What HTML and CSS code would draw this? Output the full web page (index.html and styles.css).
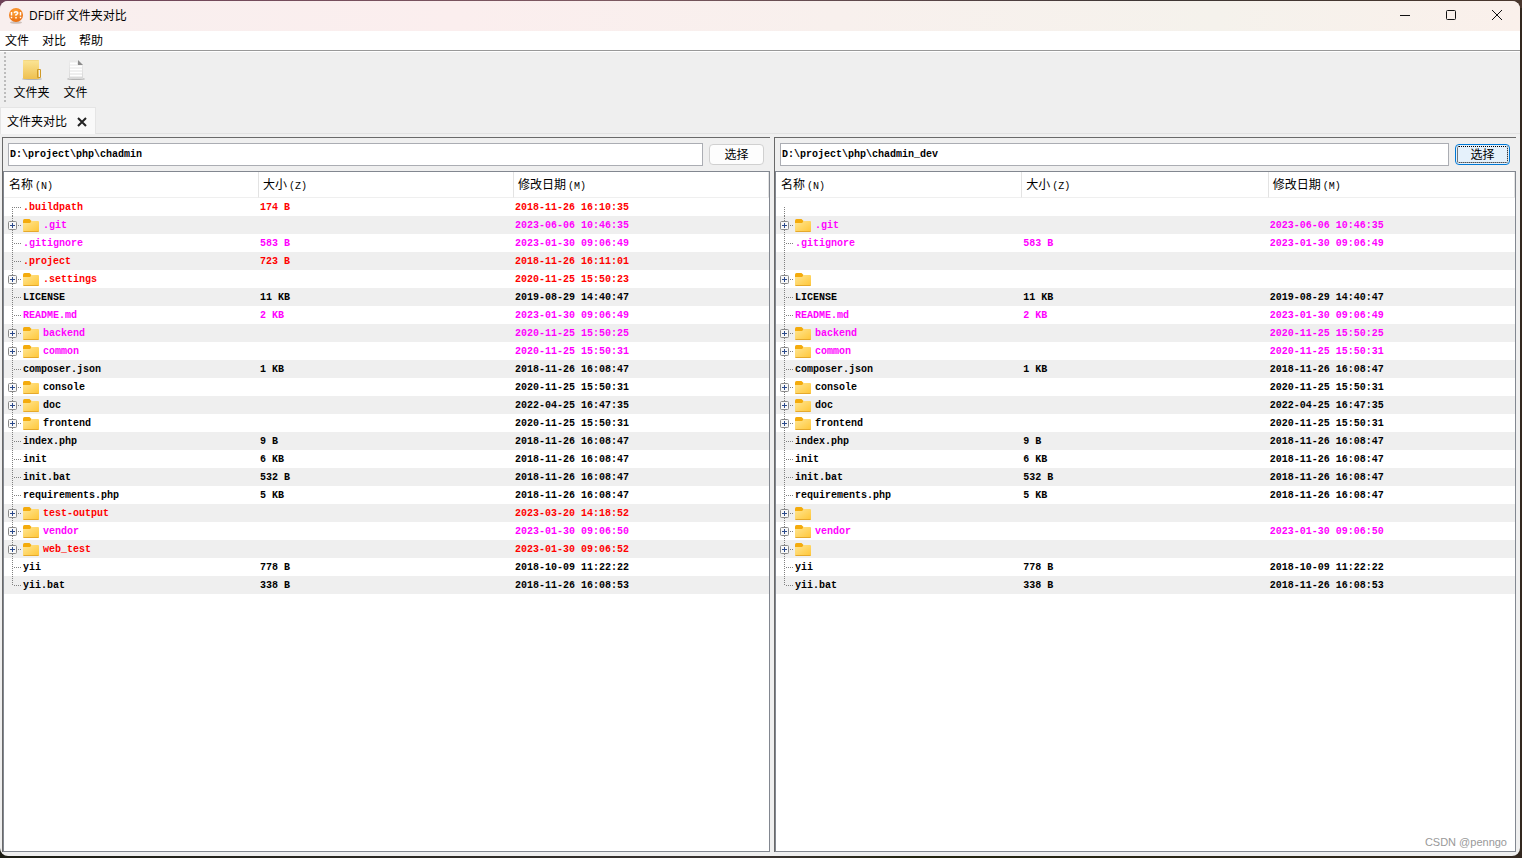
FILE: index.html
```html
<!DOCTYPE html>
<html lang="zh-CN">
<head>
<meta charset="utf-8">
<title>DFDiff 文件夹对比</title>
<link rel="stylesheet" href="styles.css">
</head>
<body>
<svg class="defs" aria-hidden="true">
  <defs>
    <linearGradient id="folder-fill" x1="0" y1="0" x2="1" y2="1"><stop offset="0" stop-color="#ffe694"/><stop offset="1" stop-color="#ffc636"/></linearGradient>
    <linearGradient id="book-fill" x1="0" y1="0" x2="0" y2="1"><stop offset="0" stop-color="#fbe596"/><stop offset="1" stop-color="#efc050"/></linearGradient>
    <linearGradient id="page-fill" x1="0" y1="0" x2="0" y2="1"><stop offset="0" stop-color="#ececec"/><stop offset="1" stop-color="#d8d8d8"/></linearGradient>
    <radialGradient id="app-fill" cx=".45" cy=".3" r=".75"><stop offset="0" stop-color="#ffa63c"/><stop offset="1" stop-color="#e8690a"/></radialGradient>
    <symbol id="folder" viewBox="0 0 16 13">
      <path d="M0 1.5Q0 0 1.5 0H6.5L8.5 2V5H0Z" fill="#f4ab0c"/>
      <path d="M0 4H7L9 2H15Q16 2 16 3V12Q16 13 15 13H1Q0 13 0 12Z" fill="url(#folder-fill)"/>
      <path d="M.5 12.5H15.5" stroke="#e5a92c"/>
    </symbol>
  </defs>
</svg>
<div class="window">
  <header class="titlebar">
    <svg class="app-icon" viewBox="0 0 16 16" aria-hidden="true">
      <ellipse cx="8" cy="14.500" rx="6" ry="1.300" fill="#cdbfb8"/>
      <circle cx="8" cy="7" r="7" fill="url(#app-fill)"/>
      <path d="M3.500 4V7.500M12.500 4V7.500M6.200 5Q6.500 3.700 8 3.700T9.800 5Q9.800 6 8 6.800V7.800M3.500 8.800V10.200M8 9V10.400M12.500 8.800V10.200" fill="none" stroke="#fff" stroke-width="1.500"/>
    </svg>
    <h1 class="title">DFDiff 文件夹对比</h1>
    <div class="controls">
      <button class="control" aria-label="最小化"><svg viewBox="0 0 12 12"><path d="M1 5.500H11"/></svg></button>
      <button class="control" aria-label="最大化"><svg viewBox="0 0 12 12"><rect x="1.500" y=".500" width="9" height="9" rx="1"/></svg></button>
      <button class="control" aria-label="关闭"><svg viewBox="0 0 12 12"><path d="M1 0L11 10M11 0L1 10"/></svg></button>
    </div>
  </header>
  <nav class="menubar">
    <button class="menu">文件</button>
    <button class="menu">对比</button>
    <button class="menu">帮助</button>
  </nav>
  <div class="toolbar">
    <span class="grip"></span>
    <button class="tool">
      <svg viewBox="0 0 24 24" aria-hidden="true">
        <ellipse cx="12" cy="21" rx="10" ry="1" fill="#b4b4b4"/>
        <path d="M3 2.500Q3 2 3.500 2H18.500Q19 2 19 2.500V21H4Q3 21 3 20Z" fill="url(#book-fill)"/>
        <path d="M3.500 2.500H18.500" stroke="#f3d783"/>
        <path d="M17.500 19.500V11.500H20.500V19.500H17.500" fill="none" stroke="#cf9a28"/>
      </svg>
      文件夹
    </button>
    <button class="tool">
      <svg viewBox="0 0 24 24" aria-hidden="true">
        <ellipse cx="12" cy="21" rx="9" ry="1" fill="#b4b4b4"/>
        <path d="M5 2H14L19 7V21H5Z" fill="url(#page-fill)"/>
        <path d="M14 2L19 7H14Z" fill="#8b8b8b"/>
        <path d="M6 5.500H13M6 8.500H18M6 11.500H18M6 14.500H18M6 17.500H18" stroke="#fff" stroke-width="2"/>
      </svg>
      文件
    </button>
  </div>
  <div class="tabs">
    <div class="tab">
      <span>文件夹对比</span>
      <button class="tab-close" aria-label="关闭标签"><svg viewBox="0 0 10 10"><path d="M1 1L9 9M9 1L1 9"/></svg></button>
    </div>
  </div>
  <main class="panes">
    <section class="pane pane-left">
      <form class="path">
        <input class="path-input" type="text" aria-label="左侧目录" value="D:\project\php\chadmin">
        <button class="pick" type="button">选择</button>
      </form>
      <div class="list">
        <table class="tree">
          <thead><tr><th>名称<span class="key">(N)</span></th><th>大小<span class="key">(Z)</span></th><th>修改日期<span class="key">(M)</span></th></tr></thead>
          <tbody id="left-rows"></tbody>
        </table>
      </div>
    </section>
    <section class="pane pane-right">
      <form class="path">
        <input class="path-input" type="text" aria-label="右侧目录" value="D:\project\php\chadmin_dev">
        <button class="pick pick-focus" type="button">选择</button>
      </form>
      <div class="list">
        <table class="tree">
          <thead><tr><th>名称<span class="key">(N)</span></th><th>大小<span class="key">(Z)</span></th><th>修改日期<span class="key">(M)</span></th></tr></thead>
          <tbody id="right-rows"></tbody>
        </table>
      </div>
    </section>
  </main>
  <span class="credit">CSDN @penngo</span>
</div>
<script src="rows.js"></script>
</body>
</html>
```

FILE: styles.css
```css
* { box-sizing: border-box; }

body {
  margin: 0;
  height: 100vh;
  padding: 1px 2px 2px 0;
  background:
    linear-gradient(90deg, #6e4257, #7d5961 40%, #3f3735 75%, #4a372d) top / 100% 8px no-repeat,
    linear-gradient(90deg, #1c1d14, #3a3432 50%, #23240f 60%, #33281f);
  font: 12px/18px "Liberation Sans", "Noto Sans CJK SC", sans-serif;
  color: #000;
}

button {
  margin: 0;
  padding: 0;
  border: 0;
  background: none;
  font: inherit;
  color: inherit;
}

.defs { position: absolute; width: 0; height: 0; }

.window {
  position: relative;
  display: flex;
  flex-direction: column;
  height: 100%;
  overflow: hidden;
  border-radius: 8px;
  background: #efefef;
}

.titlebar {
  display: flex;
  align-items: center;
  height: 30px;
  padding-left: 8px;
  background: linear-gradient(90deg, #f8efee, #fbeeee 30%, #f5f2ec 80%, #faf0eb);
}

.app-icon { width: 16px; height: 16px; }

.title {
  flex: 1;
  margin: 0 0 0 5px;
  font: 12px/18px "Open Sans", "Noto Sans CJK SC", sans-serif;
}

.controls { display: flex; }

.control {
  display: flex;
  align-items: center;
  justify-content: center;
  width: 46px;
  height: 30px;
}

.control svg {
  width: 12px;
  height: 12px;
  fill: none;
  stroke: #111;
}

.menubar {
  display: flex;
  gap: 13px;
  height: 20px;
  padding-left: 5px;
  border-bottom: 1px solid #999;
  background: #fff;
}

.toolbar {
  display: flex;
  gap: 6px;
  height: 56px;
  padding-left: 4px;
  border-top: 1px solid #fff;
}

.grip {
  width: 2px;
  height: 52px;
  background: repeating-linear-gradient(#bcbcbc 0 2px, transparent 2px 4px);
}

.tool {
  display: flex;
  flex-direction: column;
  align-items: center;
  min-width: 38px;
  padding: 6px 0 0 1px;
}

.tool svg { width: 24px; height: 24px; margin-bottom: 2px; }

.tabs {
  display: flex;
  height: 27px;
  border-bottom: 1px solid #e2e2e2;
}

.tab {
  display: flex;
  align-items: center;
  gap: 10px;
  height: 27px;
  padding: 2px 8px 0 6px;
  border: 1px solid #e5e5e5;
  border-bottom: 0;
  background: #f9f9f9;
}

.tab-close { display: flex; }

.tab-close svg {
  width: 10px;
  height: 10px;
  fill: none;
  stroke: #222;
  stroke-width: 2;
}

.panes {
  flex: 1;
  display: flex;
  gap: 4px;
  min-height: 0;
  padding: 3px 4px 4px 2px;
}

.pane {
  display: flex;
  flex-direction: column;
  min-width: 0;
  border-top: 1px solid #696969;
  border-left: 1px solid #696969;
}

.pane-left { flex: 768 1 0; }
.pane-right { flex: 742 1 0; }

.path {
  display: flex;
  align-items: center;
  gap: 6px;
  height: 33px;
  padding: 0 6px 0 5px;
}

.path-input {
  flex: 1;
  min-width: 0;
  height: 23px;
  padding: 0 1px;
  border: 1px solid #abadb3;
  background: #fff;
  font: bold 10px/18px "Liberation Mono", monospace;
  color: #000;
}

.pick {
  width: 55px;
  height: 21px;
  border: 1px solid #d0d0d0;
  border-radius: 4px;
  background: #fdfdfd;
  line-height: 18px;
}

.pick-focus {
  border-color: #0078d4;
  background: #e5f1fb;
  outline: 1px dotted #000;
  outline-offset: -3px;
}

.list {
  flex: 1;
  min-height: 0;
  overflow: hidden;
  border: 1px solid #828790;
  background: #fff;
}

.tree {
  width: 100%;
  table-layout: fixed;
  border-collapse: separate;
  border-spacing: 0;
}

.tree th {
  height: 26px;
  padding: 2px 4px 0;
  border-right: 1px solid #e3e3e3;
  border-bottom: 1px solid #efefef;
  text-align: left;
  font-weight: normal;
  line-height: 18px;
}

.tree th:first-child { padding-left: 5px; }

.key {
  margin-left: 2px;
  font: 10px/18px "Liberation Mono", monospace;
}

.tree td {
  height: 18px;
  padding: 2px 1px 0;
  white-space: nowrap;
  font: bold 10px/16px "Liberation Mono", monospace;
}

.tree tbody tr:nth-child(even) { background: #efefef; }
.tree .name { padding: 0; }

.node { display: flex; align-items: center; height: 18px; }
.label { padding-top: 2px; }

.guide {
  flex: none;
  width: 17px;
  height: 18px;
  margin: 0 2px 0 0;
}

.guide .dots { stroke: #808080; stroke-dasharray: 1 1; }
.guide .box { fill: #f8f8f8; stroke: #8a8a8a; }
.guide .plus { stroke: #2b4a8b; }

.folder { flex: none; width: 16px; height: 13px; margin-right: 4px; }

.removed { color: #f00; }
.changed { color: #f0f; }

.credit {
  position: absolute;
  right: 13px;
  bottom: 5px;
  color: #999;
  font: 11px/18px "Liberation Sans", sans-serif;
}
```

FILE: rows.js
```js
// name, is folder, size, modified, state, present on the right side
const entries = [
  ['.buildpath', 0, '174 B', '2018-11-26 16:10:35', 'removed', 0],
  ['.git', 1, '', '2023-06-06 10:46:35', 'changed', 1],
  ['.gitignore', 0, '583 B', '2023-01-30 09:06:49', 'changed', 1],
  ['.project', 0, '723 B', '2018-11-26 16:11:01', 'removed', 0],
  ['.settings', 1, '', '2020-11-25 15:50:23', 'removed', 0],
  ['LICENSE', 0, '11 KB', '2019-08-29 14:40:47', 'same', 1],
  ['README.md', 0, '2 KB', '2023-01-30 09:06:49', 'changed', 1],
  ['backend', 1, '', '2020-11-25 15:50:25', 'changed', 1],
  ['common', 1, '', '2020-11-25 15:50:31', 'changed', 1],
  ['composer.json', 0, '1 KB', '2018-11-26 16:08:47', 'same', 1],
  ['console', 1, '', '2020-11-25 15:50:31', 'same', 1],
  ['doc', 1, '', '2022-04-25 16:47:35', 'same', 1],
  ['frontend', 1, '', '2020-11-25 15:50:31', 'same', 1],
  ['index.php', 0, '9 B', '2018-11-26 16:08:47', 'same', 1],
  ['init', 0, '6 KB', '2018-11-26 16:08:47', 'same', 1],
  ['init.bat', 0, '532 B', '2018-11-26 16:08:47', 'same', 1],
  ['requirements.php', 0, '5 KB', '2018-11-26 16:08:47', 'same', 1],
  ['test-output', 1, '', '2023-03-20 14:18:52', 'removed', 0],
  ['vendor', 1, '', '2023-01-30 09:06:50', 'changed', 1],
  ['web_test', 1, '', '2023-01-30 09:06:52', 'removed', 0],
  ['yii', 0, '778 B', '2018-10-09 11:22:22', 'same', 1],
  ['yii.bat', 0, '338 B', '2018-11-26 16:08:53', 'same', 1]
];

function guide(index, isFolder, visible) {
  const top = index === 0 ? 9 : 0;
  const bottom = index === entries.length - 1 ? 10 : 18;
  let marks = `<path class="dots" d="M8.5 ${top}V${bottom}"/>`;
  if (isFolder) {
    marks += '<path class="dots" d="M14 9.5H17"/><rect class="box" x="4.5" y="5.5" width="8" height="8" rx="1"/>' +
      '<path class="plus" d="M6 9.5H11M8.5 7V12"/>';
  } else if (visible) {
    marks += '<path class="dots" d="M10 9.5H17"/>';
  }
  return `<svg class="guide" viewBox="0 0 17 18" aria-hidden="true">${marks}</svg>`;
}

function render(id, isRight) {
  document.getElementById(id).innerHTML = entries.map(([name, isFolder, size, date, state, paired], i) => {
    const visible = !isRight || paired;
    const icon = isFolder ? '<svg class="folder" aria-hidden="true"><use href="#folder"/></svg>' : '';
    const label = visible ? `<span class="label">${name}</span>` : '';
    return `<tr class="${state}"><td class="name"><div class="node">${guide(i, isFolder, visible)}${icon}` +
      `${label}</div></td><td>${visible ? size : ''}</td><td>${visible ? date : ''}</td></tr>`;
  }).join('');
}

render('left-rows', false);
render('right-rows', true);
```
